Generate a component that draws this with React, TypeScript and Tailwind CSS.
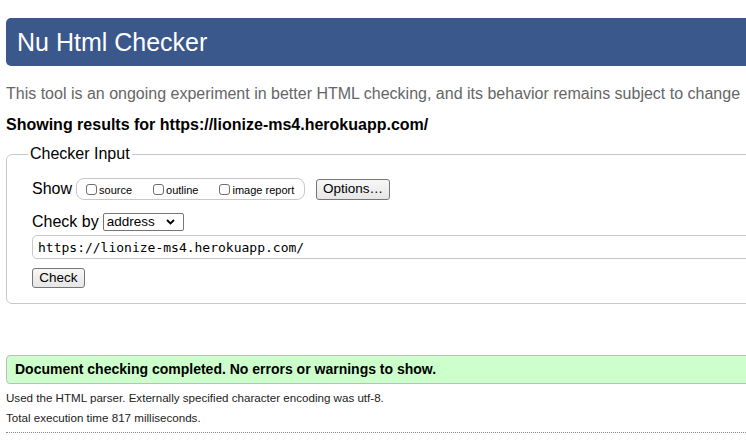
import { useState } from 'react';

const SHOW_OPTIONS = ['source', 'outline', 'image report'];

export default function App() {
  const [url, setUrl] = useState('https://lionize-ms4.herokuapp.com/');
  const [checked, setChecked] = useState<Record<string, boolean>>({});

  return (
    <div className="w-[746px] h-[448px] overflow-hidden bg-white font-['Liberation_Sans',Arial,sans-serif] text-black">
      <div className="w-[800px] pl-[6px]">
        {/* Заголовок */}
        <h1 className="mt-[18px] h-[48px] rounded-l-[5px] bg-[#3b588c] pl-[11px] flex items-center text-[25px] text-white leading-none">
          Nu Html Checker
        </h1>

        <p className="mt-[18px] text-[16px] leading-[20px] text-[#666]">
          This tool is an ongoing experiment in better HTML checking, and its behavior remains subject to change
        </p>

        <p className="mt-[11px] text-[16px] leading-[20px] font-bold">
          Showing results for https://lionize-ms4.herokuapp.com/
        </p>

        {/* Форма */}
        <fieldset className="mt-[9px] border border-[#c8c8c8] rounded-l-[6px] pl-[25px] pb-[15px]">
          <legend className="-ml-[4px] px-[2px] text-[16px] leading-[20px]">Checker Input</legend>

          <div className="mt-[14px] h-[22px] flex items-center">
            <span className="text-[16px] leading-[20px]">Show</span>
            <div className="ml-[4px] h-[22px] w-[229px] flex items-center border border-[#c8c8c8] rounded-[8px] pl-[9px]">
              {SHOW_OPTIONS.map((o, i) => (
                <label key={o} className={`flex items-center ${i > 0 ? 'ml-[21px]' : ''}`}>
                  <input
                    type="checkbox"
                    checked={!!checked[o]}
                    onChange={() => setChecked(p => ({ ...p, [o]: !p[o] }))}
                    className="appearance-none w-[11px] h-[11px] border border-[#6e6e6e] rounded-[3px] bg-white"
                  />
                  <span className="ml-[2px] text-[11px] leading-[14px] mt-[2px]">{o}</span>
                </label>
              ))}
            </div>
            <button className="ml-[11px] h-[21px] w-[74px] border border-[#767676] rounded-[3px] bg-gradient-to-b from-[#f7f7f7] to-[#e6e6e6] text-[13.5px] leading-none">
              Options…
            </button>
          </div>

          <div className="mt-[12px] h-[20px] flex items-center">
            <span className="text-[16px] leading-[20px]">Check by</span>
            <div className="ml-[4px] relative w-[81px] h-[18px] border border-[#767676] rounded-[2px] bg-white flex items-center">
              <span className="pl-[3px] text-[13.5px] leading-none">address</span>
              <svg className="absolute right-[8px] top-[5px]" width="9" height="6" viewBox="0 0 9 6">
                <path d="M1 1l3.5 3.5L8 1" fill="none" stroke="#000" strokeWidth="1.8" />
              </svg>
            </div>
          </div>

          <input
            value={url}
            onChange={e => setUrl(e.target.value)}
            className="mt-[3px] block w-full h-[24px] border border-[#c8c8c8] rounded-l-[5px] px-[5px] font-['DejaVu_Sans_Mono',monospace] text-[13px] outline-none"
          />

          <button className="mt-[9px] block h-[20px] w-[53px] border border-[#767676] rounded-[3px] bg-gradient-to-b from-[#f7f7f7] to-[#e6e6e6] text-[13.5px] leading-none">
            Check
          </button>
        </fieldset>

        {/* Результат */}
        <div className="mt-[51px] h-[29px] flex items-center bg-[#ccffcc] border border-[#bdbdbd] rounded-l-[4px] pl-[8px] text-[14px] font-bold">
          Document checking completed. No errors or warnings to show.
        </div>

        <div className="mt-[4px] text-[11.6px] leading-[20px] text-[#222]">
          <p>Used the HTML parser. Externally specified character encoding was utf-8.</p>
          <p>Total execution time 817 milliseconds.</p>
        </div>
        <div className="mt-[4px] border-t border-dotted border-[#888]" />
      </div>
    </div>
  );
}
